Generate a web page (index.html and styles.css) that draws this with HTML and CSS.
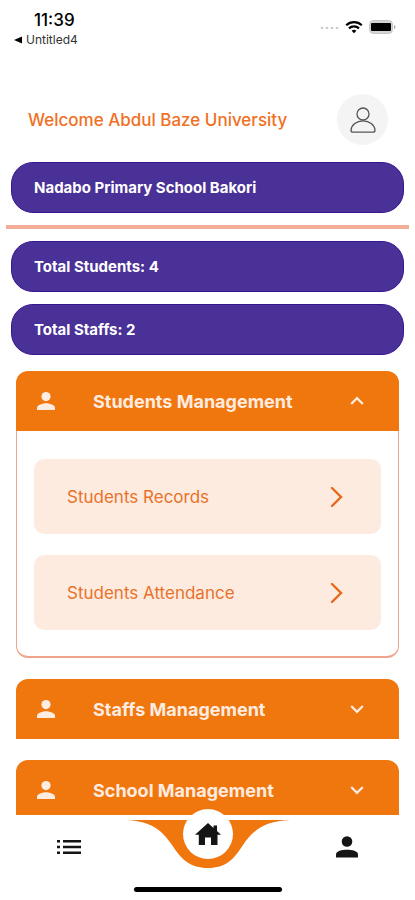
FILE: index.html
```html
<!DOCTYPE html>
<html lang="en">
  <head>
    <meta charset="UTF-8" />
    <meta name="viewport" content="width=device-width, initial-scale=1.0" />
    <title>School Dashboard</title>
    <link rel="stylesheet" href="styles.css">
  </head>
  <body>
    <div class="status-bar">
      <div class="status-left">
        <div class="time">11:39</div>
        <a class="back-app" href="#">
          <svg width="8" height="8" viewBox="0 0 8 8"><path d="M8 0.5v7L0 4z" /></svg>
          Untitled4
        </a>
      </div>
      <div class="status-right">
        <svg width="19" height="5" viewBox="0 0 19 5" fill="#cacaca">
          <circle cx="2" cy="4" r="1.3" /><circle cx="7" cy="4" r="1.3" /><circle cx="12" cy="4" r="1.3" /><circle cx="17" cy="4" r="1.3" />
        </svg>
        <svg width="18" height="14" viewBox="0 0 18 14">
          <path d="M1.2 5.2a11.2 11.2 0 0 1 15.6 0M4 8.4a7.2 7.2 0 0 1 10 0" fill="none" stroke="#000" stroke-width="2.2" />
          <path d="M9 13.2L6.6 10.7a4 4 0 0 1 4.8 0z" />
        </svg>
        <svg width="27" height="14" viewBox="0 0 27 14">
          <rect x="0.5" y="0.5" width="23" height="13" rx="4" fill="#d4d4d4" stroke="#c6c6c6" />
          <rect x="2" y="3" width="20" height="8" rx="1" />
          <path d="M25 5v4q1.5-0.5 1.5-2T25 5z" fill="#aaa" />
        </svg>
      </div>
    </div>

    <header class="welcome">
      <h1>Welcome Abdul Baze University</h1>
      <button class="avatar" aria-label="Profile">
        <svg width="26" height="26" viewBox="0 0 26 26" fill="none" stroke="#555" stroke-width="1.3">
          <circle cx="13" cy="7" r="6" />
          <path d="M3 25.2h20c1.3 0 2-0.7 2-2C24.6 18 19.5 13.8 13 13.8S1.4 18 1 23.2c0 1.3 0.7 2 2 2z" />
        </svg>
      </button>
    </header>

    <main class="content">
      <div class="pill">Nadabo Primary School Bakori</div>
      <hr class="divider" />
      <div class="stats">
        <div class="pill">Total Students: 4</div>
        <div class="pill">Total Staffs: 2</div>
      </div>

      <section class="panel">
        <button class="panel-header" aria-expanded="true">
          <svg class="person" width="18" height="18" viewBox="0 0 18 18"><circle cx="9" cy="4.6" r="4.6" /><path d="M0 18v-2.3c0-3 6-4.5 9-4.5s9 1.5 9 4.5V18z" /></svg>
          <span>Students Management</span>
          <svg class="chevron" width="14" height="10" viewBox="0 0 14 10"><path d="M1.2 8L7 2.2 12.8 8" /></svg>
        </button>
        <div class="panel-body">
          <a class="link-card" href="#">
            <span>Students Records</span>
            <svg class="arrow" width="13" height="22" viewBox="0 0 13 22"><path d="M2 2l9 9-9 9" /></svg>
          </a>
          <a class="link-card" href="#">
            <span>Students Attendance</span>
            <svg class="arrow" width="13" height="22" viewBox="0 0 13 22"><path d="M2 2l9 9-9 9" /></svg>
          </a>
        </div>
      </section>

      <section class="panel">
        <button class="panel-header" aria-expanded="false">
          <svg class="person" width="18" height="18" viewBox="0 0 18 18"><circle cx="9" cy="4.6" r="4.6" /><path d="M0 18v-2.3c0-3 6-4.5 9-4.5s9 1.5 9 4.5V18z" /></svg>
          <span>Staffs Management</span>
          <svg class="chevron" width="14" height="10" viewBox="0 0 14 10"><path d="M1.2 2L7 7.8 12.8 2" /></svg>
        </button>
      </section>

      <section class="panel">
        <button class="panel-header" aria-expanded="false">
          <svg class="person" width="18" height="18" viewBox="0 0 18 18"><circle cx="9" cy="4.6" r="4.6" /><path d="M0 18v-2.3c0-3 6-4.5 9-4.5s9 1.5 9 4.5V18z" /></svg>
          <span>School Management</span>
          <svg class="chevron" width="14" height="10" viewBox="0 0 14 10"><path d="M1.2 2L7 7.8 12.8 2" /></svg>
        </button>
      </section>
    </main>

    <nav class="tab-bar">
      <svg class="curve" width="164" height="49" viewBox="0 0 164 49"><path d="M0 0h164c-25 1-37 10-47 25-9 14-17 23-35 23s-27-9-36-23C36 10 25 1 0 0z" /></svg>
      <button class="tab" aria-label="List">
        <svg width="24" height="16" viewBox="0 0 24 16"><path d="M0 1h3v2.5H0zM6 1h18v2.5H6zM0 6.8h3v2.5H0zM6 6.8h18v2.5H6zM0 12.5h3V15H0zM6 12.5h18V15H6z" /></svg>
      </button>
      <button class="tab home" aria-label="Home">
        <svg width="26" height="22" viewBox="0 0 26 22"><path d="M13 0l5.500 5V2.500H22V8l4 3.800h-3.500V22H16v-7.500h-6V22H3.800V11.800H0z" /></svg>
      </button>
      <button class="tab" aria-label="Account">
        <svg width="22" height="22" viewBox="0 0 22 22"><circle cx="11" cy="5.5" r="5.3" /><path d="M0 21.5V18.5c0-3.5 6-4.7 11-4.7s11 1.2 11 4.7v3z" /></svg>
      </button>
      <div class="home-indicator"></div>
    </nav>
  </body>
</html>
```

FILE: styles.css
```css
* {
  box-sizing: border-box;
}

body {
  margin: 0;
  height: 100vh;
  display: flex;
  flex-direction: column;
  overflow: hidden;
  background-color: #fff;
  font-family: Inter, sans-serif;
}

button {
  border: none;
  padding: 0;
  background: none;
  font-family: inherit;
  cursor: pointer;
}

a {
  color: inherit;
  text-decoration: none;
}

/* Phone status bar */
.status-bar {
  display: flex;
  justify-content: space-between;
  padding: 9px 19px 0 14px;
  height: 94px;
  flex-shrink: 0;
}

.time {
  padding-left: 20px;
  font-size: 17px;
  line-height: 22px;
  font-weight: 500;
}

.back-app {
  display: flex;
  align-items: center;
  gap: 4px;
  font-size: 12px;
  line-height: 18px;
  color: #333;
}

.status-right {
  display: flex;
  align-items: center;
  gap: 6px;
  height: 35px;
}

/* Greeting and avatar */
.welcome {
  display: flex;
  align-items: center;
  justify-content: space-between;
  padding: 0 27px 0 28px;
  flex-shrink: 0;
}

.welcome h1 {
  margin: 0;
  font-size: 17px;
  font-weight: 500;
  color: #f1701f;
}

.avatar {
  display: flex;
  align-items: center;
  justify-content: center;
  width: 51px;
  height: 51px;
  border-radius: 50%;
  background-color: #f4f4f4;
}

/* Scrolling content */
.content {
  flex: 1;
  min-height: 0;
  overflow-y: auto;
  scrollbar-width: none;
  padding: 17px 16px 0;
}

.pill {
  margin: 0 -5px;
  padding: 0 22px;
  border-radius: 22px;
  background-color: #4a3197;
  border: 1px solid #371590;
  color: #fff;
  font-size: 15px;
  font-weight: 700;
  line-height: 49px;
}

.divider {
  height: 4px;
  margin: 12px -10px;
  border: none;
  background-color: #f3ae98;
}

.stats {
  display: flex;
  flex-direction: column;
  gap: 12px;
  margin-bottom: 16px;
}

/* Accordion panels */
.panel {
  margin-bottom: 21px;
}

.panel-header {
  display: flex;
  align-items: center;
  width: 100%;
  height: 60px;
  padding: 0 35px 0 21px;
  border-radius: 12px 12px 0 0;
  background-color: #f0760e;
  color: #ffece0;
  font-size: 18px;
  font-weight: 700;
}

.panel-header span {
  flex: 1;
  padding-left: 38px;
  text-align: left;
}

.person {
  fill: #ffece0;
}

.chevron {
  fill: none;
  stroke: #ffece0;
  stroke-width: 2.3;
}

.panel-body {
  display: flex;
  flex-direction: column;
  gap: 21px;
  padding: 28px 17px 26px;
  border: 1px solid #f0a48c;
  border-width: 0 1px 2px;
  border-radius: 0 0 12px 12px;
}

.link-card {
  display: flex;
  align-items: center;
  justify-content: space-between;
  height: 75px;
  padding: 0 38px 0 33px;
  border-radius: 10px;
  background-color: #feebe0;
  color: #e9722b;
  font-size: 17px;
}

.arrow {
  fill: none;
  stroke: #e9671c;
  stroke-width: 2.4;
  stroke-linecap: round;
}

/* Bottom navigation */
.tab-bar {
  position: relative;
  display: flex;
  justify-content: space-between;
  align-items: center;
  height: 85px;
  padding: 0 57px 21px;
  flex-shrink: 0;
  background-color: #fff;
}

.curve {
  position: absolute;
  top: 5px;
  left: 50%;
  transform: translateX(-50%);
  fill: #f0760e;
}

.tab {
  display: flex;
  align-items: center;
  justify-content: center;
  fill: #151515;
}

.home {
  position: absolute;
  top: -6px;
  left: 50%;
  transform: translateX(-50%);
  width: 50px;
  height: 50px;
  border-radius: 50%;
  background-color: #fff;
}

.home-indicator {
  position: absolute;
  bottom: 8px;
  left: 50%;
  transform: translateX(-50%);
  width: 148px;
  height: 5px;
  border-radius: 3px;
  background-color: #000;
}
```
